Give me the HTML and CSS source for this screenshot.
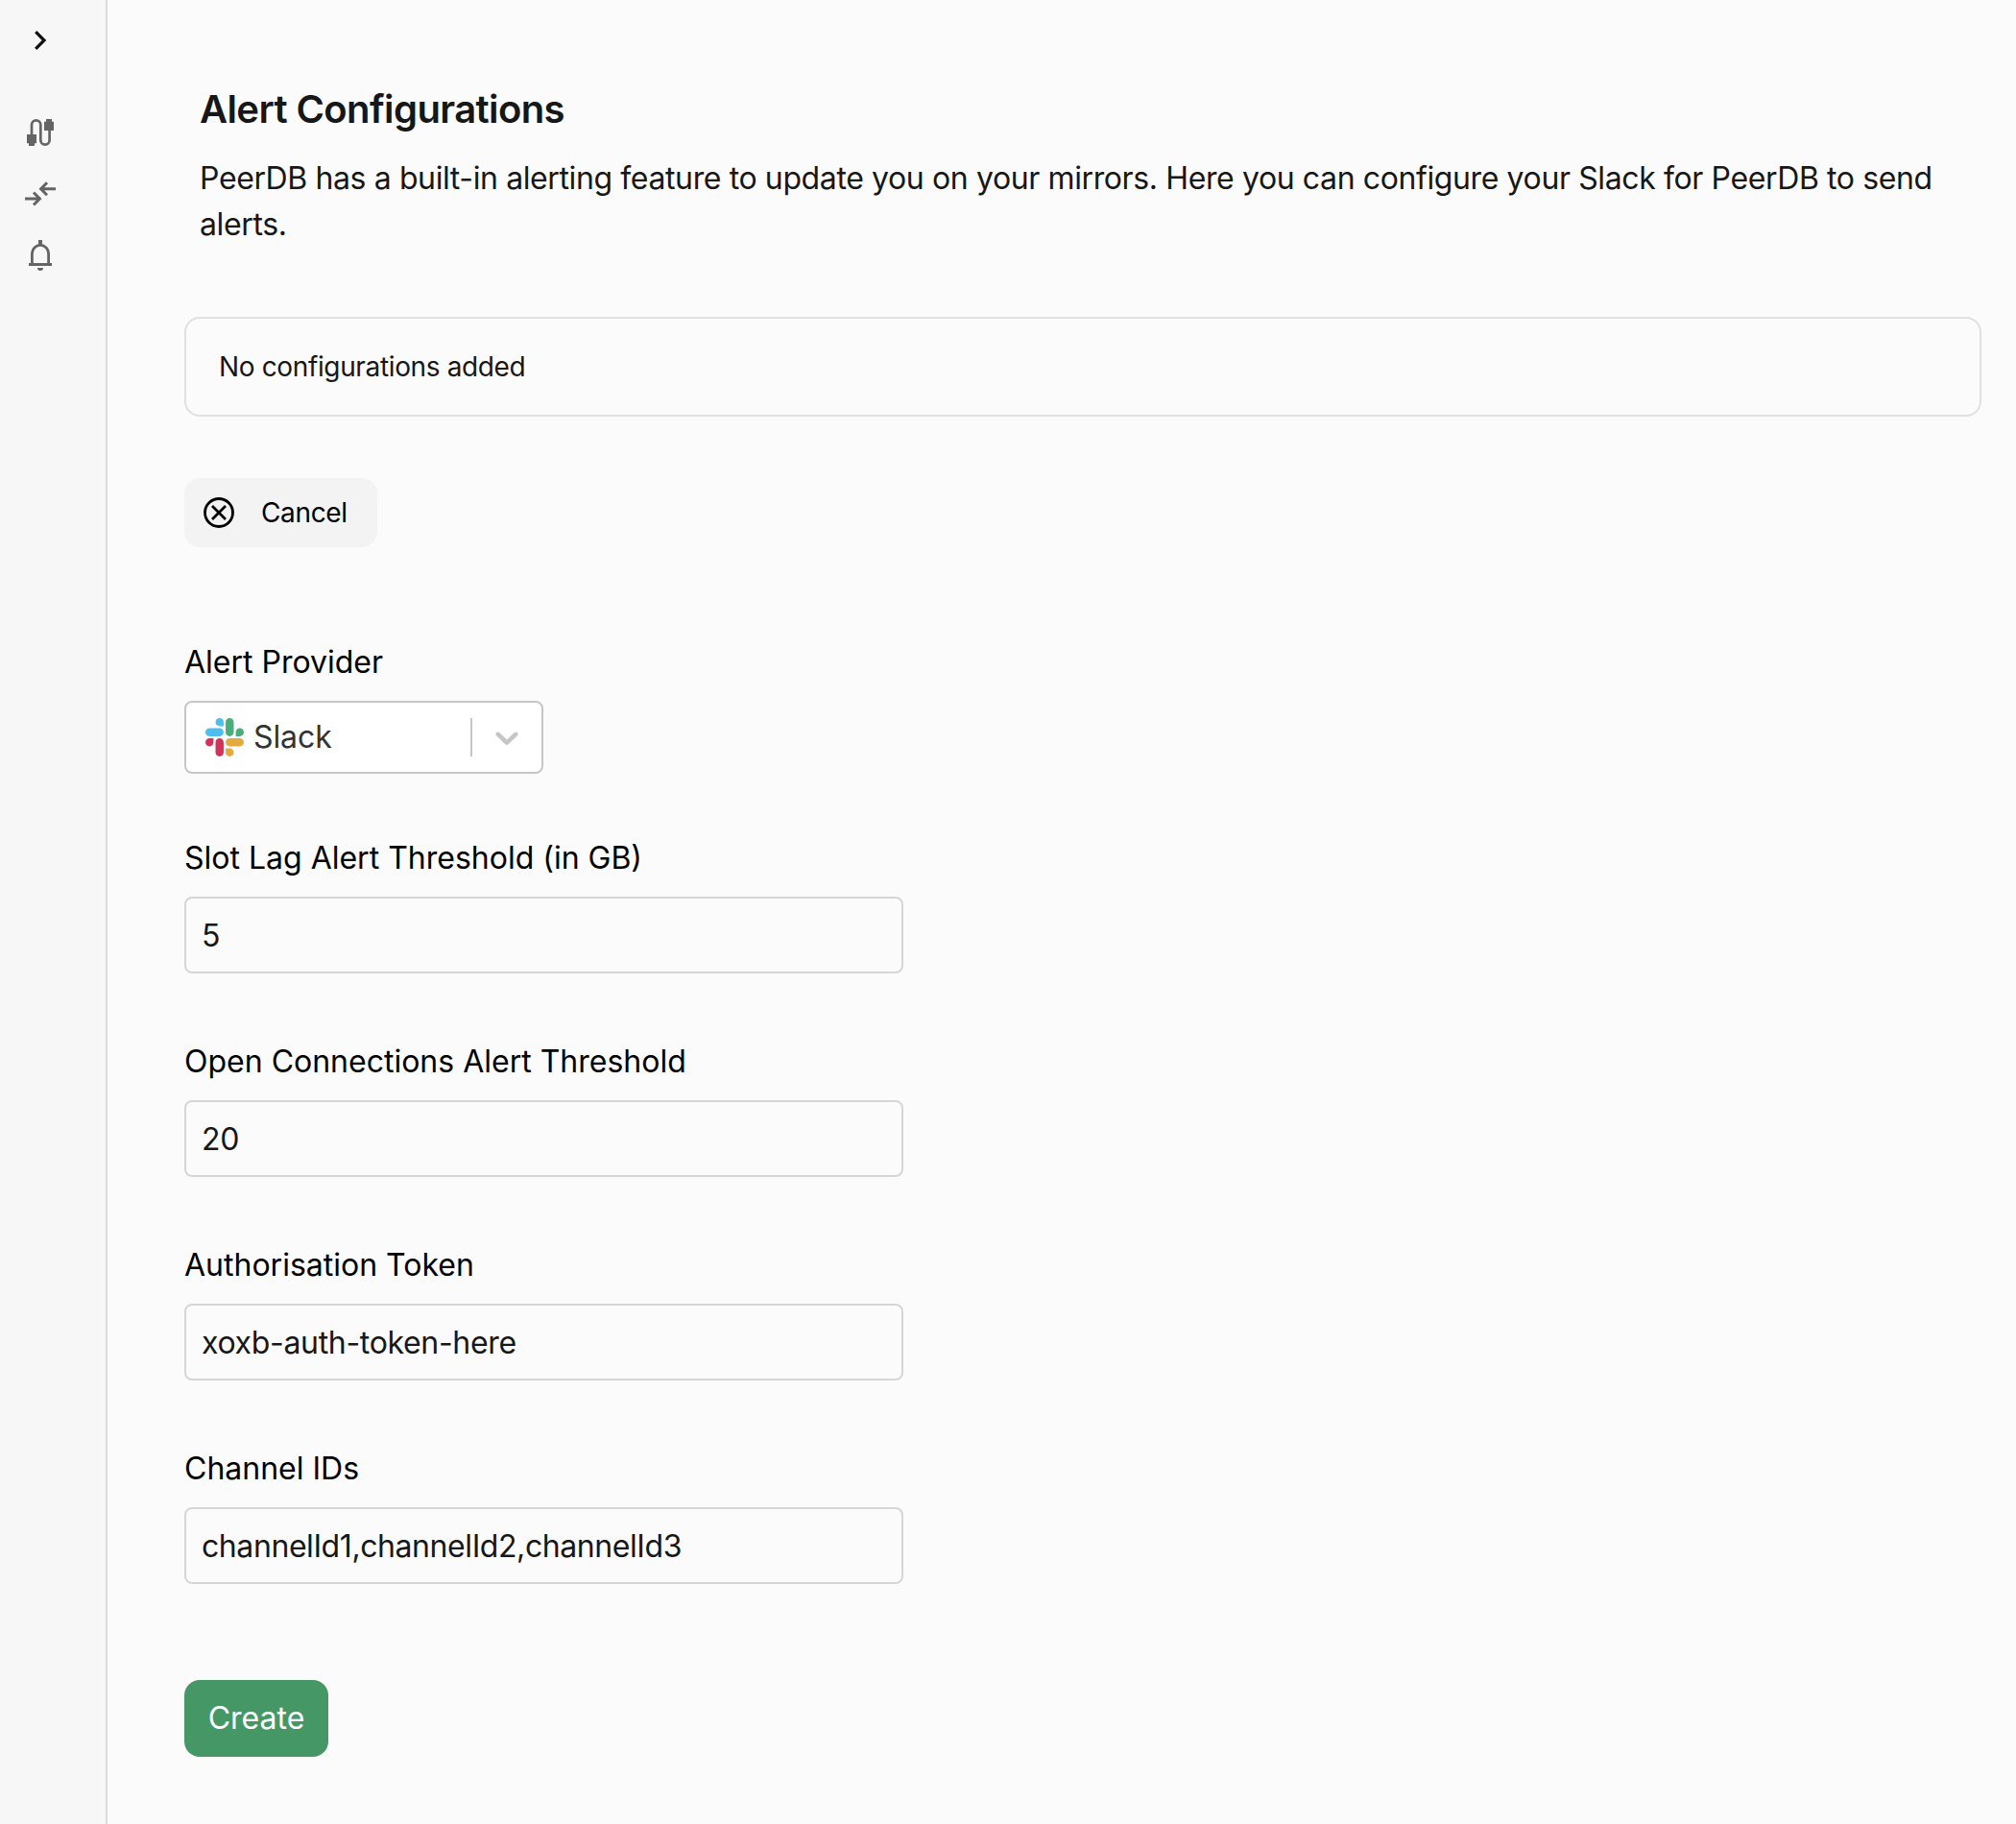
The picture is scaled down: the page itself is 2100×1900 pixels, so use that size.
FILE: index.html
```html
<!DOCTYPE html>
<html lang="en">
<head>
<meta charset="utf-8">
<title>Alert Configurations</title>
<link rel="stylesheet" href="styles.css">
</head>
<body>
<div class="layout">
  <nav class="sidebar">
    <svg class="nav-icon nav-toggle" viewBox="0 0 44 44"><path d="M17.200 13.200L26 22l-8.800 8.800" fill="none" stroke="#111" stroke-width="3.200"/></svg>
    <svg class="nav-icon" viewBox="0 0 44 44"><path d="M13 25V14a4.650 4.650 0 0 1 9.300 0v16a4.650 4.650 0 0 0 9.300 0V18" fill="none" stroke="#646464" stroke-width="2.700"/><path d="M8 24h10v9.300h-2V36h-6v-2.700H8zM26 10.700h2V8h6v2.700h2V20H26z" fill="#646464"/></svg>
    <svg class="nav-icon" viewBox="0 0 44 44"><path d="M6 27h15M15 20.500l6.400 6.500-6.400 6.500M38 16.700H23M29 10.200l-6.400 6.500 6.400 6.500" fill="none" stroke="#646464" stroke-width="3"/></svg>
    <svg class="nav-icon" viewBox="0 1 44 44"><path d="M13.400 32V21a8.600 8.600 0 0 1 17.200 0v11" fill="none" stroke="#646464" stroke-width="2.800"/><path d="M10 31h24v3H10zM20 7h4v5h-4zM19 36h6a3 3 0 0 1-6 0z" fill="#646464"/></svg>
  </nav>
  <main class="content">
    <header class="intro">
      <h1 class="title">Alert Configurations</h1>
      <p class="description">PeerDB has a built-in alerting feature to update you on your mirrors. Here you can configure your Slack for PeerDB to send alerts.</p>
    </header>
    <section class="empty-card">No configurations added</section>
    <button class="button cancel"><svg class="cancel-icon" viewBox="0 0 32 32"><path d="M16 1.500a14.500 14.500 0 1 0 0 29 14.500 14.500 0 0 0 0-29zM9 9l14 14M23 9L9 23" fill="none" stroke="#000" stroke-width="2.800"/></svg><span>Cancel</span></button>
    <form class="form">
      <div class="field field-select">
        <span class="label">Alert Provider</span>
        <div class="select">
          <svg class="slack" viewBox="0 0 122.800 122.800"><path d="M25.800 77.600c0 7.100-5.800 12.900-12.900 12.900S0 84.700 0 77.600s5.800-12.900 12.900-12.900h12.900v12.900zm6.500 0c0-7.100 5.800-12.900 12.900-12.900s12.900 5.800 12.900 12.900v32.300c0 7.100-5.800 12.900-12.900 12.900s-12.900-5.800-12.900-12.900V77.600z" fill="#d2335a"/><path d="M45.200 25.800c-7.100 0-12.900-5.800-12.900-12.900S38.100 0 45.200 0s12.900 5.800 12.900 12.900v12.900H45.200zm0 6.500c7.100 0 12.900 5.800 12.900 12.900s-5.800 12.900-12.900 12.900H12.900C5.800 58.100 0 52.300 0 45.200s5.800-12.900 12.900-12.900h32.300z" fill="#4dbeee"/><path d="M97 45.200c0-7.100 5.800-12.900 12.900-12.900s12.900 5.800 12.900 12.900-5.800 12.900-12.900 12.900H97V45.200zm-6.500 0c0 7.100-5.800 12.900-12.900 12.900s-12.900-5.800-12.900-12.900V12.900C64.700 5.800 70.500 0 77.600 0s12.900 5.800 12.900 12.900v32.300z" fill="#4bad7c"/><path d="M77.600 97c7.100 0 12.900 5.800 12.900 12.900s-5.800 12.900-12.900 12.900-12.900-5.800-12.900-12.900V97h12.900zm0-6.500c-7.100 0-12.900-5.800-12.900-12.900s5.800-12.900 12.900-12.900h32.300c7.100 0 12.900 5.800 12.900 12.900s-5.800 12.900-12.900 12.900H77.600z" fill="#e5aa3f"/></svg>
          <span class="select-value">Slack</span>
          <span class="divider"></span>
          <svg class="caret" viewBox="0 0 20 20"><path fill="#c6c6c6" d="M4.516 7.548c0.436-0.446 1.043-0.481 1.576 0l3.908 3.747 3.908-3.747c0.533-0.481 1.141-0.446 1.574 0 0.436 0.445 0.408 1.197 0 1.615-0.406 0.418-4.695 4.502-4.695 4.502-0.217 0.223-0.502 0.335-0.787 0.335s-0.570-0.112-0.789-0.335c0 0-4.287-4.084-4.695-4.502s-0.436-1.170 0-1.615z"/></svg>
        </div>
      </div>
      <label class="field"><span class="label">Slot Lag Alert Threshold (in GB)</span><input class="input" value="5"></label>
      <label class="field"><span class="label">Open Connections Alert Threshold</span><input class="input" value="20"></label>
      <label class="field"><span class="label">Authorisation Token</span><input class="input" value="xoxb-auth-token-here"></label>
      <label class="field"><span class="label">Channel IDs</span><input class="input input-list" value="channelId1,channelId2,channelId3"></label>
      <button class="button create" type="button">Create</button>
    </form>
  </main>
</div>
</body>
</html>
```
FILE: styles.css
```css
* { box-sizing: border-box; }
body { margin: 0; background: #fbfbfb; color: #171717; font: 32px/48px Inter, sans-serif; }
.layout { display: flex; height: 1900px; }
.sidebar { width: 112px; flex: none; background: #f7f7f7; border-right: 2px solid #dcdcdc; padding: 20px 20px 0; display: flex; flex-direction: column; gap: 20px; }
.nav-icon { width: 44px; height: 44px; display: block; }
.nav-toggle { margin-bottom: 32px; }
.content { flex: 1; padding: 84px 36px 0 80px; display: flex; flex-direction: column; align-items: flex-start; }
.intro { padding: 0 16px; }
.title { margin: 0 0 18px; font-size: 40px; line-height: 60px; font-weight: 600; letter-spacing: -.6px; }
.description { margin: 0; letter-spacing: -.385px; }
.empty-card { width: 100%; height: 104px; margin-top: 72px; border: 2px solid #e0e0e0; border-radius: 16px; padding: 0 34px; display: flex; align-items: center; font-size: 28px; letter-spacing: -.36px; }
.button { border: 0; font: inherit; border-radius: 16px; display: flex; align-items: center; }
.cancel { margin-top: 64px; height: 72px; width: 201px; padding: 0 20px; gap: 28px; background: #f3f3f3; color: #000; font-size: 28px; letter-spacing: -.36px; }
.cancel-icon { width: 32px; height: 32px; }
.form { margin-top: 96px; width: 749px; }
.field { display: block; margin-bottom: 68px; }
.field-select { margin-bottom: 64px; }
.label { display: block; margin-bottom: 16px; color: #000; }
.select { width: 374px; height: 76px; border: 2px solid #c6c6c6; border-radius: 8px; background: #fff; display: flex; align-items: center; padding: 0 16px 0 20px; color: #333; }
.slack { width: 40px; height: 40px; margin-right: 10px; }
.select-value { flex: 1; letter-spacing: -.1px; }
.divider { width: 2px; height: 40px; background: #c6c6c6; margin-right: 16px; }
.caret { width: 40px; height: 40px; }
.input { display: block; width: 100%; height: 80px; border: 2px solid #d6d6d6; border-radius: 8px; background: transparent; padding: 0 16px; color: #171717; font: inherit; letter-spacing: -.32px; outline: 0; }
.input-list { letter-spacing: -.42px; }
.create { width: 150px; height: 80px; margin-top: 100px; justify-content: center; padding: 0; background: #459766; color: #fff; }
```
